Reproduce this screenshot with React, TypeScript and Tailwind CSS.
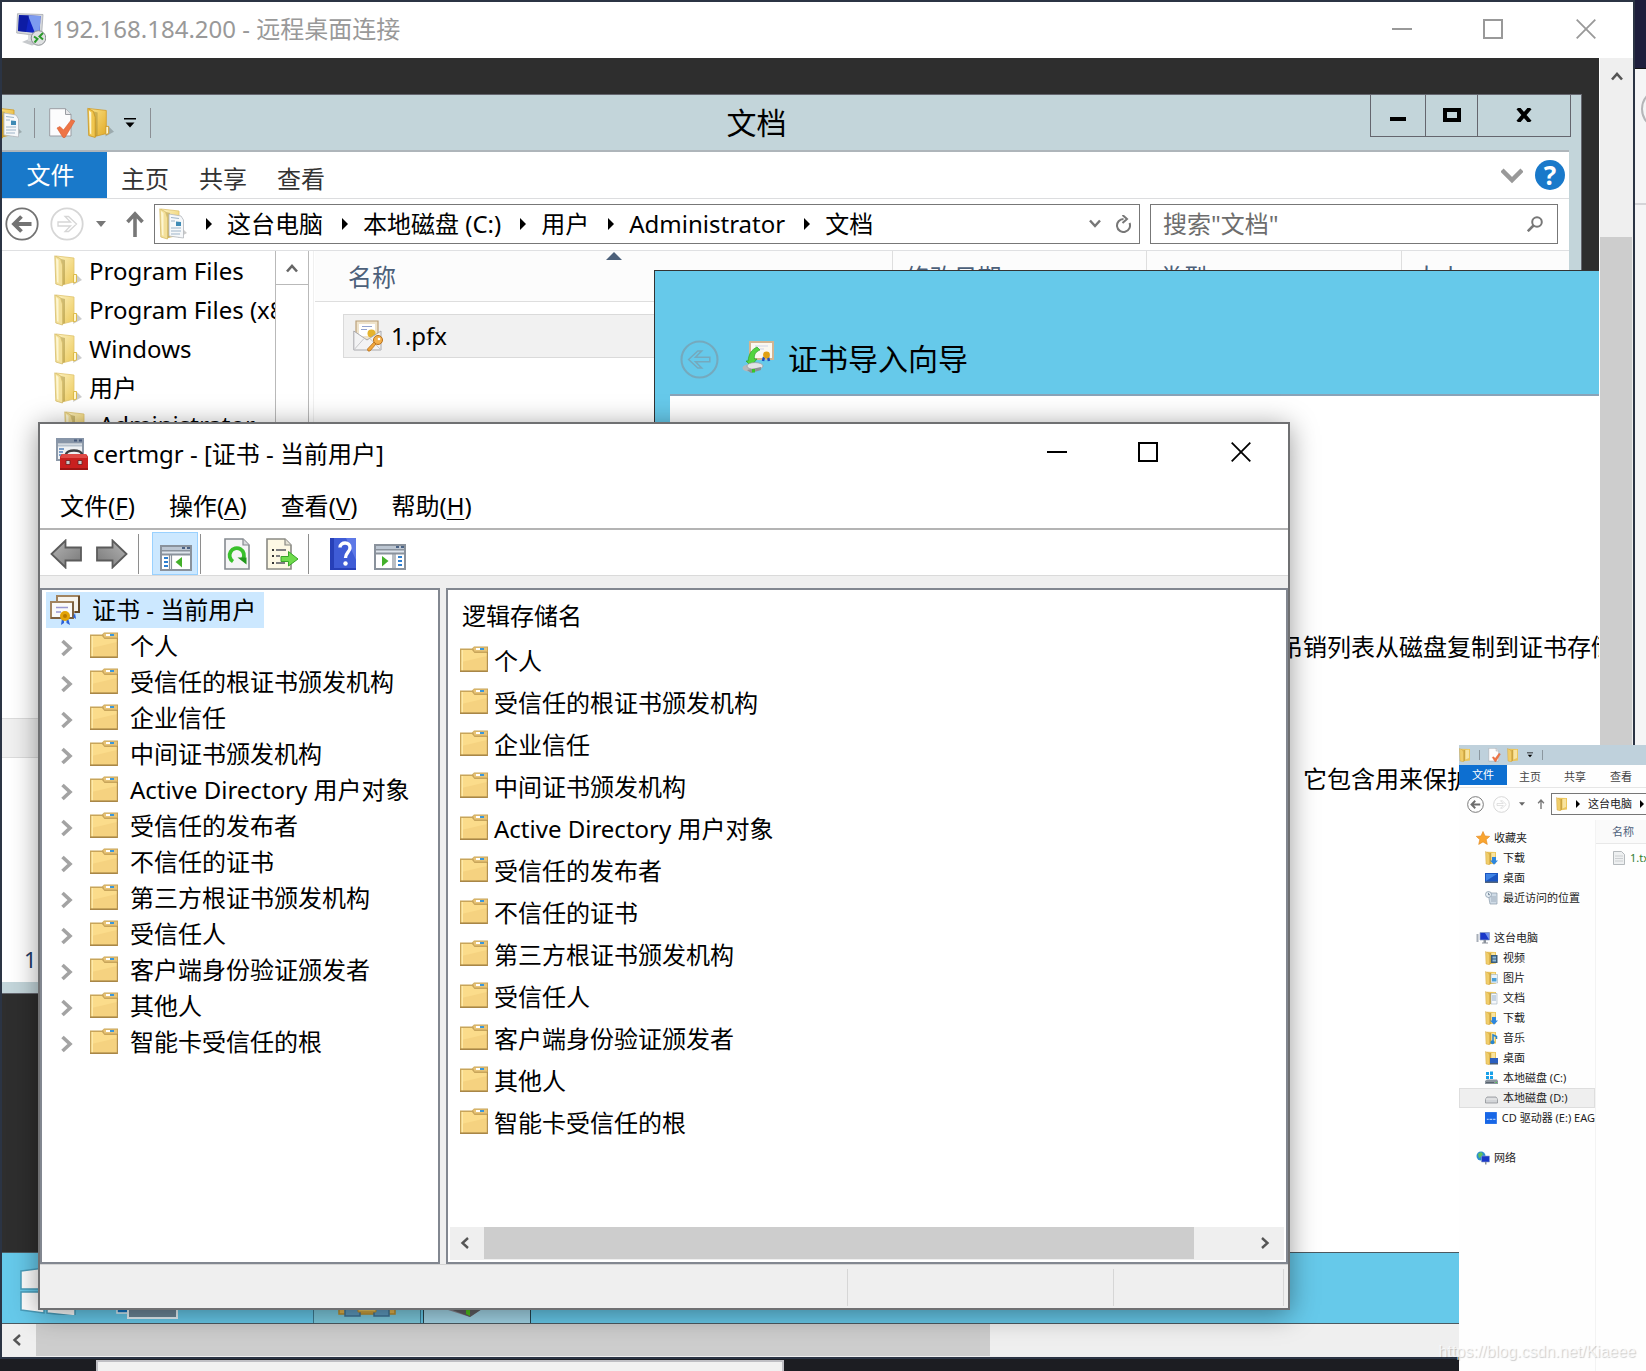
import React from "react";

type P = { className?: string };

/* ---------- small glyphs ---------- */

const Minus = ({ className }: P) => (
  <svg viewBox="0 0 20 20" className={className} fill="none" stroke="currentColor" strokeWidth="2">
    <path d="M0 10H20" />
  </svg>
);
const Square = ({ className }: P) => (
  <svg viewBox="0 0 20 20" className={className} fill="none" stroke="currentColor" strokeWidth="2">
    <path d="M1 1H19V19H1Z" />
  </svg>
);
const Cross = ({ className }: P) => (
  <svg viewBox="0 0 20 20" className={className} fill="none" stroke="currentColor" strokeWidth="1.8">
    <path d="M.7.7L19.3 19.3M19.3.7L.7 19.3" />
  </svg>
);
const ChevronUp = ({ className }: P) => (
  <svg viewBox="0 0 12 10" className={className} fill="none" stroke="currentColor" strokeWidth="2.6">
    <path d="M1 8.5L6 3L11 8.5" />
  </svg>
);
const ChevronSide = ({ className, flip }: P & { flip?: boolean }) => (
  <svg viewBox="0 0 10 12" className={className} fill="none" stroke="currentColor" strokeWidth="2.4">
    <path d={flip ? "M2 1L7.5 6L2 11" : "M8 1L2.5 6L8 11"} />
  </svg>
);
const Crumb = ({ className }: P) => (
  <svg viewBox="0 0 6 12" className={className} fill="#000">
    <path d="M0 0L6 6L0 12Z" />
  </svg>
);
const ArrowCircle = ({ className, dir, hollow }: P & { dir: "left" | "right"; hollow?: boolean }) => (
  <svg viewBox="0 0 34 34" className={className} fill="none" stroke="currentColor">
    <circle cx="17" cy="17" r="15.7" strokeWidth="1.8" />
    <g transform={dir === "right" ? "matrix(-1 0 0 1 34 0)" : undefined}>
      {hollow ? (
        <path d="M7.5 17L15.5 9.5H19L13.5 15H26V19H13.5L19 24.5H15.5Z" strokeWidth="1.3" />
      ) : (
        <path d="M26.5 17H10M16.5 9.5L9 17L16.5 24.5" strokeWidth="3.8" />
      )}
    </g>
  </svg>
);
const UpArrow = ({ className }: P) => (
  <svg viewBox="0 0 18 26" className={className} fill="none" stroke="#777" strokeWidth="3.6">
    <path d="M9 26V3M1.5 11L9 2.8L16.5 11" />
  </svg>
);
const DownTri = ({ className }: P) => (
  <svg viewBox="0 0 10 6" className={className} fill="currentColor">
    <path d="M0 0H10L5 6Z" />
  </svg>
);
const QuickMenu = ({ className }: P) => (
  <svg viewBox="0 0 12 10" className={className} fill="#000">
    <path d="M0 0H12V1.5H0ZM1.5 4.5H10.5L6 9.5Z" />
  </svg>
);

/* ---------- folder and file icons ---------- */

const OpenFolder = ({ className, page, vivid }: P & { page?: boolean; vivid?: boolean }) => (
  <svg viewBox="0 0 28 32" className={className}>
    <defs>
      <linearGradient id="leaf" x1="0" y1="0" x2="1" y2="1">
        <stop offset="0" stopColor="#fdf3c4" />
        <stop offset="1" stopColor="#ecc95a" />
      </linearGradient>
      <linearGradient id="leafVivid" x1="0" y1="0" x2="1" y2="1">
        <stop offset="0" stopColor="#fbe48a" />
        <stop offset="1" stopColor="#e2ab28" />
      </linearGradient>
    </defs>
    <path d="M19 30L28 25L22 19Z" fill="#000" opacity=".2" />
    <path
      d="M2 1L20 3V27L8 30Z"
      fill={vivid ? "url(#leafVivid)" : "url(#leaf)"}
      stroke={vivid ? "#d19a22" : "#dfc470"}
      strokeWidth=".8"
    />
    <path d="M7 4L11 5V29L7.500 30.500Z" fill="#9c8432" opacity=".45" />
    {page && (
      <>
        <path d="M10 6L22 8L24.500 12V30L10 28Z" fill="#f6f8fa" stroke="#b4b8bd" strokeWidth=".8" />
        <path d="M12 9.500L20 10.500M12 13H16M12 20H22M12 23H22M12 26H21" stroke="#9db4c8" strokeWidth="1.2" />
        <path d="M17 13.500L22 14V18H17Z" fill="#3f8bb5" />
      </>
    )}
    <path
      d="M.8.800L6.500 3.800L8.500 10V31L1.800 29Z"
      fill={vivid ? "#f0c64e" : "#f3e09a"}
      stroke={vivid ? "#c8921c" : "#d6bd6b"}
      strokeWidth=".8"
    />
    <path d="M2 3L4.500 5V28L3 27Z" fill="#fdf6d2" />
    {!page && (
      <path d="M19.500 19.500H22.500V27L19.500 28Z" fill="#fff6cf" stroke={vivid ? "#cf9a26" : "#ddbb4a"} strokeWidth="1" />
    )}
  </svg>
);

const PlainFolder = ({ className }: P) => (
  <svg viewBox="0 0 28 26" className={className}>
    <path d="M0 2.500H12L14 .5H28V26H0Z" fill="#c8a55a" />
    <path d="M1.500 4H12L14.500 7H27V24.500H1.500Z" fill="#fbdc8b" />
    <path d="M1.500 16L27 10V24.500H1.500Z" fill="#f3cf7c" opacity=".75" />
    <path d="M1.500 4H3V24.500H1.500Z" fill="#fdeaa9" />
    <path d="M13 1.500H27V5.500H14.500Z" fill="#e8c477" />
    <path d="M16 2H20V4H16Z" fill="#fff" />
    <path d="M20 2H24V4H20Z" fill="#3b97d9" />
    <path d="M0 24.500H28V26H0Z" fill="#a88647" />
    <path d="M26.800 6H28V26H26.800Z" fill="#b49150" />
  </svg>
);

const CheckDoc = ({ className }: P) => (
  <svg viewBox="0 0 26 30" className={className}>
    <path d="M.7.700H16.500L22 6.500V28H.7Z" fill="#fcfcfd" stroke="#9a9da3" strokeWidth="1" />
    <path d="M16.500.700V6.500H22" fill="#e6e6e9" stroke="#9a9da3" strokeWidth="1" />
    <path d="M8 20L11 18.500L14.500 22L22.500 11.500L25.800 13L16 29.500H14Z" fill="#ee7445" stroke="#d65c30" strokeWidth=".6" />
  </svg>
);

const RdpIcon = ({ className }: P) => (
  <svg viewBox="0 0 30 33" className={className}>
    <path d="M6 29L13 26H21L24 30L16 32.500Z" fill="#c6c9cc" />
    <path d="M12 22H18V28H12Z" fill="#d9dbdd" />
    <path d="M1.500.700L27 1.500L25.500 23L.7 20Z" fill="#d5d8dc" stroke="#a8abb0" strokeWidth=".8" />
    <path d="M3 2L24.500 3L23.500 20.500L2 18Z" fill="#1226c4" />
    <path d="M12 2.500L24.500 3L23.500 20.500L19 20Z" fill="#7d9cf0" />
    <path d="M3 2L13 2.500L10 19L2 18Z" fill="#0a1590" opacity=".6" />
    <circle cx="22.500" cy="25" r="7.300" fill="#dfe1e2" stroke="#8b8f93" strokeWidth="1" />
    <path d="M18 23.500L21.500 26L18.500 29.500M27 20L23.500 23.500L27 26.500" fill="none" stroke="#2c9a2c" strokeWidth="2" />
  </svg>
);

const PfxIcon = ({ className }: P) => (
  <svg viewBox="0 0 30 32" className={className}>
    <path d="M3 1H25V20H3Z" fill="#efe3cb" stroke="#b99f78" strokeWidth="1.2" />
    <path d="M6 4H22V16H6Z" fill="#fff" />
    <path d="M9 6.500H19M8 9.500H14" stroke="#93a3cf" strokeWidth="1" />
    <circle cx="18.500" cy="13.500" r="4" fill="#e5b32e" />
    <path d="M.8 11L14 20L28 11V30H.8Z" fill="#f3f3f4" stroke="#a9a9ad" strokeWidth="1" />
    <path d="M.8 30L11 18.500M28 30L17 18.500" stroke="#c6c6c9" strokeWidth="1" fill="none" />
    <path d="M23 24L17 31H15L14.500 29L21.500 21.500Z" fill="#f1a73c" stroke="#b9701a" strokeWidth=".8" />
    <circle cx="25" cy="20" r="4.500" fill="#f4b04b" stroke="#b9701a" strokeWidth="1" />
    <circle cx="26" cy="19" r="1.300" fill="#fff" />
  </svg>
);

const ImportIcon = ({ className }: P) => (
  <svg viewBox="0 0 32 32" className={className}>
    <path d="M8 1H31V18H8Z" fill="#fbf8f1" stroke="#d2b592" strokeWidth="2" />
    <path d="M13 5H26M13 8H22" stroke="#cfd5e8" strokeWidth="1" />
    <path d="M22 16L21 20M26 16L27 20" stroke="#1d4fc4" strokeWidth="2.500" />
    <circle cx="24.500" cy="14" r="3.400" fill="#e0a012" />
    <path d="M6 20C7 13 9 9 15 6L18 9C13 11 12 14 12.500 18H15L9 25L4 20Z" fill="#52d43e" stroke="#2aa12a" strokeWidth=".7" />
    <ellipse cx="7" cy="27" rx="6.500" ry="3.600" fill="#b5b8bc" />
    <ellipse cx="13" cy="25" rx="8" ry="3.400" fill="#e2e4e6" stroke="#8b8f93" strokeWidth=".6" />
    <path d="M5 29L19 26V29L9 32Z" fill="#8d9195" />
    <path d="M10 28H13V31.500H10Z" fill="#35c728" />
  </svg>
);

const ToolboxIcon = ({ className }: P) => (
  <svg viewBox="0 0 32 32" className={className}>
    <path d="M0 0H28V23H0Z" fill="#8d99a8" />
    <path d="M2 5.500H26V21H2Z" fill="#eef1f4" />
    <path d="M0 0H28V5H0Z" fill="#8795a8" />
    <path d="M18 1.500H21V3.500H18ZM23 1.500H26V3.500H23Z" fill="#46597a" />
    <path d="M2 6.500H26V8.500H2Z" fill="#b6c1cd" />
    <path d="M3 11H8M3 14H7M3 17H6" stroke="#5682bb" strokeWidth="1.5" />
    <path d="M10 17C10 11 26 11 26 17" fill="none" stroke="#3d3d40" strokeWidth="2.600" />
    <path d="M4 18.500L6 16H30L32 18.500V32H4Z" fill="#c9201f" />
    <path d="M6 16H30L31.500 20H4.500Z" fill="#df4a46" />
    <path d="M4 30H32V32H4Z" fill="#9c1514" />
    <path d="M10 22.500H14V26.500H10ZM22 22.500H26V26.500H22Z" fill="#c9c9cb" stroke="#6c1b1b" strokeWidth=".8" />
  </svg>
);

const CertIcon = ({ className }: P) => (
  <svg viewBox="0 0 30 30" className={className}>
    <path d="M7 1H29V17H7Z" fill="#f6f4ee" stroke="#a18460" strokeWidth="2" />
    <path d="M29 1V17H25" fill="none" stroke="#65492a" strokeWidth="2" />
    <path d="M1 7H23V23H1Z" fill="#fafafa" stroke="#a18460" strokeWidth="2" />
    <path d="M23 7V23H1" fill="none" stroke="#715537" strokeWidth="1.500" />
    <path d="M6 12.500H18M6 17H11" stroke="#9898d2" strokeWidth="1.600" />
    <path d="M12 23L11 30L14 28V23ZM18 23L20 30L16.500 28V23Z" fill="#2b62d9" />
    <path d="M25 18L26 24L23 22Z" fill="#2b62d9" />
    <circle cx="15" cy="21" r="5" fill="#e3a408" />
    <circle cx="15" cy="21" r="2" fill="#b77900" />
  </svg>
);

const NavArrow = ({ className, right }: P & { right?: boolean }) => (
  <svg viewBox="0 0 32 30" className={className}>
    <defs>
      <linearGradient id={right ? "navR" : "navL"} x1="0" y1="0" x2="1" y2="1">
        <stop offset="0" stopColor="#b5b5b5" />
        <stop offset="1" stopColor="#777" />
      </linearGradient>
    </defs>
    <g transform={right ? "matrix(-1 0 0 1 32 0)" : undefined}>
      <path
        d="M1.500 15L15.500 1.500V8.500H31V21.500H15.500V28.500Z"
        fill={right ? "url(#navR)" : "url(#navL)"}
        stroke="#5b5b5b"
        strokeWidth="1.800"
      />
    </g>
  </svg>
);

const PaneIcon = ({ className, right }: P & { right?: boolean }) => (
  <svg viewBox="0 0 32 26" className={className}>
    <path d="M0 0H32V26H0Z" fill="#8a929c" />
    <path d="M2 2H30V5H2Z" fill="#bcc6d2" />
    <path d="M22 2H25V4H22ZM27 2H30V4H27Z" fill="#4a6285" />
    <path d="M2 6.500H30V8.500H2Z" fill="#dfe5ec" />
    <path d="M2 10.500H30V24H2Z" fill="#fff" />
    {right ? (
      <>
        <path d="M19 10V25M21 10V25" stroke="#8a929c" strokeWidth="1.200" />
        <path d="M24 13H28M24 17H28M24 21H28" stroke="#2f7fd0" strokeWidth="2" />
        <path d="M8 12L14.500 17L8 22.500Z" fill="#43b02a" />
      </>
    ) : (
      <>
        <path d="M9.500 10V25M11.500 10V25" stroke="#8a929c" strokeWidth="1.200" />
        <path d="M4 13H8M4 17H8M4 21H8" stroke="#2f7fd0" strokeWidth="2" />
        <path d="M22 12L15.500 17L22 22.500Z" fill="#43b02a" />
      </>
    )}
  </svg>
);

const RefreshIcon = ({ className }: P) => (
  <svg viewBox="0 0 26 32" className={className}>
    <path d="M1 1H19L25 7V31H1Z" fill="#f5f5f6" stroke="#858a90" strokeWidth="1.600" />
    <path d="M19 1V7H25" fill="#d8dadd" stroke="#858a90" strokeWidth="1.200" />
    <path d="M9 23.500A7.200 7.200 0 1 1 19 21" fill="none" stroke="#39c02c" strokeWidth="3.800" />
    <path d="M13.500 19.500H22.500V26.500Z" fill="#22981d" />
  </svg>
);

const ExportIcon = ({ className }: P) => (
  <svg viewBox="0 0 32 32" className={className}>
    <path d="M1 1H19L25 7V31H1Z" fill="#fdf8e4" stroke="#8a8a84" strokeWidth="1.600" />
    <path d="M19 1V7H25" fill="#e5e2d5" stroke="#8a8a84" strokeWidth="1.200" />
    <path d="M6 12H8M6 18H8M6 25H8" stroke="#333" strokeWidth="1.800" />
    <path d="M10 12H20M10 18H14M10 25H19" stroke="#7e7e80" strokeWidth="1.800" />
    <path d="M15 18.500H22.500V13.500L32 21L22.500 28V23.500H15Z" fill="#6fdb4c" stroke="#38a428" strokeWidth="1" />
  </svg>
);

const HelpBook = ({ className }: P) => (
  <svg viewBox="0 0 26 32" className={className}>
    <path d="M0 0H26V32H0Z" fill="#2740b8" />
    <path d="M4 0H26V30H4Z" fill="#3f5cd6" />
    <path d="M16 0H26V22Z" fill="#6c86ee" opacity=".7" />
    <path d="M10 9.500C10 3.500 20.500 3.500 20 10C19.800 14 15.500 14.500 15.500 20" fill="none" stroke="#fff" strokeWidth="3.400" />
    <circle cx="15.500" cy="25.500" r="2.200" fill="#fff" />
  </svg>
);

/* ---------- icons of the small explorer ---------- */

const MiniFolder = ({ className, children }: P & { children?: React.ReactNode }) => (
  <svg viewBox="0 0 13 14" className={className}>
    <path d="M2 .8L11 1V12.500L3 13.500Z" fill="#ecc65c" />
    <path d="M4.500 2L6 2V12.800L4.500 13.300Z" fill="#b38e30" opacity=".6" />
    <path d="M.5.500L3.500 2L4.500 4V13.800L1 13Z" fill="#f0cd6a" stroke="#cf9f38" strokeWidth=".4" />
    <path d="M6.500 2L10 1.800V10L6.500 11.500Z" fill="#f8e3a0" />
    {children}
  </svg>
);

const miniIcons: Record<string, React.ReactNode> = {
  star: (
    <svg viewBox="0 0 14 14" className="size-3.5">
      <path d="M7 .5L9 5L13.700 5.400L10.200 8.600L11.300 13.400L7 10.900L2.700 13.400L3.800 8.600L.3 5.400L5 5Z" fill="#f9a531" stroke="#e0851a" strokeWidth=".6" />
    </svg>
  ),
  download: (
    <MiniFolder className="h-3.5 w-[13px]">
      <path d="M7 6H11V9.500H13L9 13.800L5 9.500H7Z" fill="#2d86dd" />
    </MiniFolder>
  ),
  desktop: (
    <svg viewBox="0 0 13 14" className="h-3.5 w-[13px]">
      <path d="M0 2H13V11.500H0Z" fill="#1b55c0" />
      <path d="M1 3L12 3L1 10Z" fill="#3f83e4" />
      <path d="M0 10.500H13V12H0Z" fill="#51657f" />
    </svg>
  ),
  recent: (
    <svg viewBox="0 0 13 14" className="h-3.5 w-[13px]">
      <path d="M3 2H12V13H5Z" fill="#cfdbe6" stroke="#8b9bab" strokeWidth=".7" />
      <path d="M6 6H11M6 8H11M6 10H11" stroke="#8b9bab" strokeWidth=".7" />
      <circle cx="3.500" cy="3.500" r="3" fill="#e6edf3" stroke="#7f92a5" strokeWidth=".7" />
      <path d="M3.500 1.800V3.700H5" stroke="#4a6179" strokeWidth=".7" fill="none" />
    </svg>
  ),
  computer: (
    <svg viewBox="0 0 14 14" className="size-3.5">
      <path d="M.5 3H2.500V11H.5Z" fill="#a8afb8" />
      <path d="M4 1.500H13.500V9H4Z" fill="#1a38c8" stroke="#8fa0c0" strokeWidth=".7" />
      <path d="M9 2H13V8.500Z" fill="#6f90ee" />
      <path d="M7.500 9H10V11.500H12V12.500H6V11.500H7.500Z" fill="#8b929c" />
    </svg>
  ),
  video: (
    <MiniFolder className="h-3.5 w-[13px]">
      <path d="M6 4H12.500V12H6Z" fill="#3b5c78" />
      <path d="M7.500 5.500H11V7.500H7.500ZM7.500 8.500H11V10.500H7.500Z" fill="#8db9db" />
    </MiniFolder>
  ),
  picture: (
    <MiniFolder className="h-3.5 w-[13px]">
      <path d="M6 3.500H12.500V12H6Z" fill="#eaf4fb" stroke="#8fa6b8" strokeWidth=".5" />
      <path d="M7 7H11.500V10.500H7Z" fill="#4aa0d8" />
    </MiniFolder>
  ),
  document: (
    <MiniFolder className="h-3.5 w-[13px]">
      <path d="M6 2.500H12V13H6Z" fill="#f5f8fb" stroke="#8fa0b0" strokeWidth=".5" />
      <path d="M7 5H11M7 7H11M7 9H11" stroke="#6e93b8" strokeWidth=".7" />
    </MiniFolder>
  ),
  music: (
    <MiniFolder className="h-3.5 w-[13px]">
      <path d="M8 11V4L11.500 5.500V8" fill="none" stroke="#2785cf" strokeWidth="1.500" />
      <circle cx="7.500" cy="11.200" r="2" fill="#2785cf" />
    </MiniFolder>
  ),
  deskfolder: (
    <MiniFolder className="h-3.5 w-[13px]">
      <path d="M5 7H13V13H5Z" fill="#2a5fc0" />
      <path d="M5 12H13V13.500H5Z" fill="#4b5c75" />
    </MiniFolder>
  ),
  system: (
    <svg viewBox="0 0 13 14" className="h-3.5 w-[13px]">
      <path d="M1 1H4V4H1ZM5 .5H8V4H5ZM1 5H4V8H1ZM5 5H8V8H5Z" fill="#18a0e8" />
      <path d="M0 10L2 8.500H12L13 10V13H0Z" fill="#8b949e" />
      <path d="M1 11H9V12H1Z" fill="#5a646f" />
      <path d="M10.500 11H12V12H10.500Z" fill="#47d147" />
    </svg>
  ),
  drive: (
    <svg viewBox="0 0 13 14" className="h-3.5 w-[13px]">
      <path d="M.5 8L2 6H11L12.500 8V12H.5Z" fill="#d3d5d8" stroke="#84888d" strokeWidth=".7" />
      <path d="M.5 8H12.500" stroke="#f5f5f5" strokeWidth=".7" />
    </svg>
  ),
  cd: (
    <svg viewBox="0 0 13 14" className="h-3.5 w-[13px]">
      <path d="M0 .5H13V13.500H0Z" fill="#1766e6" />
      <path d="M2 8.500H4M5 8.500H8M9 8.500H11.500" stroke="#a9c9fb" strokeWidth="1.200" />
    </svg>
  ),
  network: (
    <svg viewBox="0 0 14 14" className="size-3.5">
      <circle cx="5" cy="5" r="4.500" fill="#2c8fd0" />
      <path d="M2 3L5 1L7 3L5 6L3 7Z" fill="#5ec15a" />
      <path d="M5.500 5H13.500V11H5.500Z" fill="#1a38c8" stroke="#93a5c8" strokeWidth=".6" />
      <path d="M9 11H10.500V13.500H9Z" fill="#8b929c" />
    </svg>
  ),
};

/* ---------- data ---------- */

const stores = [
  "个人",
  "受信任的根证书颁发机构",
  "企业信任",
  "中间证书颁发机构",
  "Active Directory 用户对象",
  "受信任的发布者",
  "不信任的证书",
  "第三方根证书颁发机构",
  "受信任人",
  "客户端身份验证颁发者",
  "其他人",
  "智能卡受信任的根",
];

const menus = [
  ["文件", "F"],
  ["操作", "A"],
  ["查看", "V"],
  ["帮助", "H"],
];

const crumbs = ["这台电脑", "本地磁盘 (C:)", "用户", "Administrator", "文档"];

const miniGroups: { icon: string; name: string; items: { icon: string; name: string; active?: boolean }[] }[] = [
  {
    icon: "star",
    name: "收藏夹",
    items: [
      { icon: "download", name: "下载" },
      { icon: "desktop", name: "桌面" },
      { icon: "recent", name: "最近访问的位置" },
    ],
  },
  {
    icon: "computer",
    name: "这台电脑",
    items: [
      { icon: "video", name: "视频" },
      { icon: "picture", name: "图片" },
      { icon: "document", name: "文档" },
      { icon: "download", name: "下载" },
      { icon: "music", name: "音乐" },
      { icon: "deskfolder", name: "桌面" },
      { icon: "system", name: "本地磁盘 (C:)" },
      { icon: "drive", name: "本地磁盘 (D:)", active: true },
      { icon: "cd", name: "CD 驱动器 (E:) EAG" },
    ],
  },
  { icon: "network", name: "网络", items: [] },
];

/* ---------- remote explorer window ---------- */

function Explorer() {
  return (
    <section className="absolute top-9 right-[17px] bottom-[330px] left-0 flex flex-col border-t border-r border-b border-[#65666e] bg-[#c3d5da] pr-3 pb-[11px]">
      <header className="relative flex h-[57px] shrink-0 items-center border-b-2 border-[#aeb5ba]">
        <OpenFolder page vivid className="-ml-2 h-8 w-7" />
        <span className="ml-3 h-[30px] w-px bg-[#8b8f94]" />
        <CheckDoc className="ml-3.5 h-[30px] w-[26px]" />
        <OpenFolder vivid className="ml-3 h-8 w-[27px]" />
        <QuickMenu className="ml-2.5 h-2.5 w-3" />
        <span className="ml-3.5 h-[30px] w-px bg-[#8b8f94]" />
        <h2 className="absolute inset-x-0 -ml-[58px] text-center text-[30px] leading-[56px]">文档</h2>
        <div className="absolute top-0 -right-0.5 flex h-[42px] border-x border-b border-[#65666e]">
          <button aria-label="最小化" className="flex w-[55px] items-end justify-center border-r border-[#65666e] pb-[15px]">
            <span className="h-1 w-4 bg-black" />
          </button>
          <button aria-label="最大化" className="flex w-[52px] items-center justify-center border-r border-[#65666e] pb-0.5">
            <span className="h-3.5 w-[18px] border-4 border-black" />
          </button>
          <button aria-label="关闭" className="flex w-[92px] items-center justify-center pb-0.5">
            <svg viewBox="0 0 16 14" className="h-3.5 w-4" stroke="#000" strokeWidth="4">
              <path d="M2 0L14 14M14 0L2 14" />
            </svg>
          </button>
        </div>
      </header>

      <nav className="flex h-[47px] shrink-0 items-stretch border-b border-[#dcdddf] bg-white text-[#333]">
        <button className="w-[105px] bg-[#1979ca] pr-2 text-white">文件</button>
        <button className="ml-3.5 pt-2">主页</button>
        <button className="ml-[30px] pt-2">共享</button>
        <button className="ml-[30px] pt-2">查看</button>
        <div className="ml-auto flex items-center gap-3 pr-1">
          <svg viewBox="0 0 22 17" className="h-[17px] w-[22px]" fill="none" stroke="#999" strokeWidth="4.500">
            <path d="M1 3L11 13L21 3" />
          </svg>
          <button aria-label="帮助" className="flex size-[30px] items-center justify-center rounded-full bg-[#1979ca] text-[26px] font-bold text-white">
            ?
          </button>
        </div>
      </nav>

      <div className="flex h-[52px] shrink-0 items-center border-b border-[#dfe0e2] bg-white pb-0.5 pl-[3px]">
        <ArrowCircle dir="left" className="size-[34px] text-[#737373]" />
        <ArrowCircle dir="right" hollow className="ml-[11px] size-[34px] text-[#d6d6d6]" />
        <DownTri className="ml-3 h-1.5 w-2.5 text-[#777]" />
        <UpArrow className="ml-5 h-[26px] w-[18px]" />
        <div className="ml-2.5 flex h-10 flex-1 items-center border border-[#777] pl-1 text-black">
          <OpenFolder page className="h-8 w-7" />
          {crumbs.map((c) => (
            <React.Fragment key={c}>
              <Crumb className="ml-[19px] h-3 w-1.5 shrink-0" />
              <span className="ml-[15px] whitespace-nowrap">{c}</span>
            </React.Fragment>
          ))}
          <svg viewBox="0 0 12 9" className="mr-3.5 ml-auto h-[9px] w-3" fill="none" stroke="#777" strokeWidth="2.500">
            <path d="M1 1.500L6 7L11 1.500" />
          </svg>
          <svg viewBox="0 0 16 18" className="mr-2 h-[18px] w-4" fill="none" stroke="#777" strokeWidth="2">
            <path d="M14.500 8A6.500 6.500 0 1 1 8.500 4" />
            <path d="M7.500 0L12 4L7.500 8" />
          </svg>
        </div>
        <label className="mr-[11px] ml-2.5 flex h-10 w-[408px] items-center border border-[#777] pr-3.5 pl-3">
          <input aria-label="搜索" placeholder={'搜索"文档"'} className="min-w-0 flex-1 outline-none placeholder:text-[#6d6d6d]" />
          <svg viewBox="0 0 16 16" className="size-4" fill="none" stroke="#777" strokeWidth="2">
            <circle cx="10" cy="6" r="4.800" />
            <path d="M6.500 9.500L.8 15.200" strokeWidth="2.600" />
          </svg>
        </label>
      </div>

      <div className="flex min-h-0 flex-1 bg-white">
        <div className="relative w-[273px] shrink-0 overflow-hidden">
          <ul className="text-black">
            {["Program Files", "Program Files (x86)", "Windows", "用户"].map((n) => (
              <li key={n} className="flex h-[39px] items-center pl-[52px] whitespace-nowrap">
                <OpenFolder className="h-8 w-7 shrink-0" />
                <span className="ml-[7px]">{n}</span>
              </li>
            ))}
            <li className="flex h-[39px] items-center pl-[62px] whitespace-nowrap">
              <OpenFolder className="h-8 w-7 shrink-0" />
              <span className="mb-1 ml-[7px]">Administrator</span>
            </li>
          </ul>
          <div className="mt-[272px] h-10 border-y border-[#dcdcdc] bg-[#f0f0f0]" />
          <div className="absolute bottom-0 left-[22px] text-[22px] leading-[46px] text-[#1e3a66]">1</div>
        </div>
        <div className="w-[34px] shrink-0 border-x border-[#b9b9b9]">
          <button aria-label="向上滚动" className="flex h-[34px] w-full items-center justify-center border-b border-[#b9b9b9] text-[#666]">
            <ChevronUp className="h-2.5 w-3" />
          </button>
        </div>
        <div className="mr-px ml-1 w-px bg-[#f0f0f0]" />
        <table className="h-fit flex-1 table-fixed text-left">
          <colgroup>
            <col className="w-[577px]" />
            <col className="w-[254px]" />
            <col className="w-[255px]" />
            <col />
          </colgroup>
          <thead>
            <tr className="h-[50px] border-b border-[#dedede] bg-[#fcfcfc] text-[#4c607a]">
              <th className="relative border-r border-[#dedede] pt-0.5 pl-[33px] font-normal">
                名称
                <svg viewBox="0 0 16 8" className="absolute top-px left-[291px] h-2 w-4" fill="#4c607a">
                  <path d="M8 0L16 8H0Z" />
                </svg>
              </th>
              <th className="border-r border-[#dedede] pt-0.5 pl-[13px] font-normal">修改日期</th>
              <th className="border-r border-[#dedede] pt-0.5 pl-[13px] font-normal">类型</th>
              <th className="pt-0.5 pl-[13px] font-normal">大小</th>
            </tr>
          </thead>
          <tbody>
            <tr>
              <td colSpan={4} className="pt-3 pl-7">
                <div className="flex h-11 items-center border border-[#dadada] bg-[#f1f1f1] pl-[9px] text-black">
                  <PfxIcon className="h-8 w-[30px]" />
                  <span className="ml-2">1.pfx</span>
                </div>
              </td>
            </tr>
          </tbody>
        </table>
      </div>
    </section>
  );
}

function Wizard() {
  return (
    <section className="absolute top-[212px] right-0 bottom-[72px] left-[652px] flex flex-col overflow-hidden border-t border-l border-[#333] bg-[#66c9ea] pl-[15px] text-black">
      <header className="flex h-[123px] shrink-0 items-end pb-[15px] pl-2.5">
        <ArrowCircle dir="left" hollow className="size-[39px] text-[#75a9bd]" />
        <ImportIcon className="mb-1.5 ml-[23px] size-8" />
        <h2 className="ml-3.5 text-[30px] leading-[40px]">证书导入向导</h2>
      </header>
      <div className="min-h-0 flex-1 border-t-2 border-[#8aa3b8] bg-white pl-[609px] whitespace-nowrap">
        <p className="pt-[233px] leading-9">吊销列表从磁盘复制到证书存储</p>
        <p className="pt-24 leading-9">，它包含用来保护</p>
      </div>
    </section>
  );
}

function Taskbar() {
  return (
    <footer className="absolute inset-x-0 bottom-0 flex h-[72px] items-end border-y border-[#4c5a61] bg-[#66c9ea]">
      <svg viewBox="0 0 56 48" className="mb-2 ml-[18px] h-12 w-14" fill="#fff" stroke="#4a9dbb" strokeWidth="1.500">
        <path d="M1 4L24 1V22H1ZM27 .5L55 -3V22H27ZM1 25H24V46L1 43ZM27 25H55V49L27 46Z" />
      </svg>
      <svg viewBox="0 0 62 40" className="mb-1 ml-10 h-10 w-[62px]">
        <path d="M1 10H20V34H1Z" fill="#0f74c4" stroke="#e8f3f8" strokeWidth="1.500" />
        <path d="M12 2H61V39H12Z" fill="#6d8799" stroke="#e8f3f8" strokeWidth="2" />
      </svg>
      <div className="ml-[135px] flex h-full w-[108px] items-end justify-center border-x border-[#3d7c93] bg-[#7dcbdf] pb-1.5">
        <svg viewBox="0 0 58 34" className="h-[34px] w-[58px]">
          <path d="M1 2H57V31H1Z" fill="#e3b650" stroke="#b98d2e" strokeWidth="1.500" />
          <path d="M7 12H22V33H7ZM36 12H51V33H36Z" fill="#5f9cc0" stroke="#3f7699" strokeWidth="1.500" />
          <path d="M20 14H38V29H20Z" fill="#e9c55c" stroke="#b98d2e" />
        </svg>
      </div>
      <div className="ml-0.5 flex h-full w-[108px] items-end border-x border-[#26424d] bg-[#a3d6e8] pb-1.5 pl-5">
        <svg viewBox="0 0 42 30" className="h-[30px] w-[42px]">
          <path d="M1 20L22 2L41 14V20L26 30L1 22Z" fill="#8a8790" />
          <path d="M1 20L22 12L41 20L26 30Z" fill="#5f5e63" />
          <path d="M22 20H26V29L22 27Z" fill="#4ec21a" />
        </svg>
      </div>
    </footer>
  );
}

function HorizontalThumb({ grow, rest, right }: { grow: string; rest: string; right?: boolean }) {
  return (
    <div className="flex h-[33px] shrink-0 bg-[#efefef] text-[#555]">
      <button aria-label="向左滚动" className="flex w-[34px] shrink-0 items-center justify-center pr-1 pb-0.5">
        <ChevronSide className="h-3.5 w-2.5" />
      </button>
      <div className={`mb-px bg-[#cdcdcd] ${grow}`} />
      <div className={rest} />
      {right && (
        <button aria-label="向右滚动" className="flex w-[38px] shrink-0 items-center justify-center pb-0.5">
          <ChevronSide flip className="h-3.5 w-2.5" />
        </button>
      )}
    </div>
  );
}

/* ---------- certificate manager ---------- */

function CertManager() {
  return (
    <section className="absolute top-[422px] right-[356px] bottom-[61px] left-[38px] flex flex-col border-2 border-[#6f7072] bg-white text-black shadow-[0_4px_26px_rgba(0,0,0,0.4)]">
      <header className="flex h-[61px] shrink-0 items-center pb-0.5 pl-4">
        <ToolboxIcon className="size-8" />
        <h1 className="ml-[5px]">certmgr - [证书 - 当前用户]</h1>
        <div className="ml-auto flex items-center pr-[37px] pb-1">
          <button aria-label="最小化">
            <Minus className="size-5" />
          </button>
          <button aria-label="最大化" className="ml-[71px]">
            <Square className="size-5" />
          </button>
          <button aria-label="关闭" className="ml-[73px]">
            <Cross className="size-5" />
          </button>
        </div>
      </header>
      <nav className="flex h-[45px] shrink-0 items-center gap-[34px] border-b-2 border-[#b4b4b4] pb-0.5 pl-5">
        {menus.map(([label, key]) => (
          <button key={key}>
            {label}(<span className="underline decoration-1 underline-offset-4">{key}</span>)
          </button>
        ))}
      </nav>
      <div className="flex h-[46px] shrink-0 items-center border-b border-[#dadada] pt-0.5 pl-2.5">
        <button aria-label="后退">
          <NavArrow className="h-[30px] w-8" />
        </button>
        <button aria-label="前进" className="ml-3.5">
          <NavArrow right className="h-[30px] w-8" />
        </button>
        <span className="ml-2.5 h-10 w-px bg-[#8e8e8e]" />
        <button aria-label="显示控制台树" className="ml-[13px] flex h-[43px] w-[46px] items-end justify-center border border-[#99d1ff] bg-[#cce8ff] pb-[3px] pl-0.5">
          <PaneIcon className="h-[26px] w-8" />
        </button>
        <span className="ml-0.5 h-10 w-px bg-[#8e8e8e]" />
        <button aria-label="刷新" className="ml-[23px]">
          <RefreshIcon className="h-8 w-[26px]" />
        </button>
        <button aria-label="导出列表" className="ml-4">
          <ExportIcon className="size-8" />
        </button>
        <span className="ml-2.5 h-10 w-px bg-[#8e8e8e]" />
        <button aria-label="帮助" className="ml-[21px]">
          <HelpBook className="h-8 w-[26px]" />
        </button>
        <button aria-label="操作窗格" className="mt-1.5 ml-[18px]">
          <PaneIcon right className="h-[26px] w-8" />
        </button>
      </div>

      <div className="flex min-h-0 flex-1 gap-1.5 bg-[#efefef] pt-3">
        <div className="w-[400px] shrink-0 border-2 border-[#828790] bg-white pt-0.5 pl-1">
          <div className="flex h-9 w-fit items-center bg-[#cce8ff] pr-2 pl-1">
            <CertIcon className="size-[30px]" />
            <span className="ml-3">证书 - 当前用户</span>
          </div>
          <ul className="pt-px">
            {stores.map((s) => (
              <li key={s} className="flex h-9 items-center pl-[15px] whitespace-nowrap">
                <svg viewBox="0 0 12 18" className="mt-0.5 h-[18px] w-3" fill="none" stroke="#a3a3a3" strokeWidth="3.600">
                  <path d="M1.500 2L9 9L1.500 16" />
                </svg>
                <PlainFolder className="mb-1 ml-[17px] h-[26px] w-7" />
                <span className="mb-0.5 ml-3">{s}</span>
              </li>
            ))}
          </ul>
        </div>
        <div className="flex min-w-0 flex-1 flex-col border-2 border-[#828790] bg-white">
          <div className="min-h-0 flex-1">
            <table className="w-full text-left">
              <thead>
                <tr>
                  <th className="h-[50px] pt-0.5 pl-3.5 font-normal">逻辑存储名</th>
                </tr>
              </thead>
              <tbody>
                {stores.map((s) => (
                  <tr key={s}>
                    <td className="h-[42px] p-0 pl-3">
                      <div className="flex items-center">
                        <PlainFolder className="mb-1 h-[26px] w-7" />
                        <span className="ml-1.5">{s}</span>
                      </div>
                    </td>
                  </tr>
                ))}
              </tbody>
            </table>
          </div>
          <div className="mr-0.5 mb-0.5 ml-0.5">
            <HorizontalThumb grow="flex-1" rest="w-[52px]" right />
          </div>
        </div>
      </div>

      <footer className="flex h-[44px] shrink-0 justify-end border-t border-[#d4d4d4] bg-[#efefef] pt-1 pr-1 pb-0.5">
        <span className="w-[266px] border-l border-[#d6d6d6]" />
        <span className="w-[171px] border-x border-[#d6d6d6]" />
      </footer>
    </section>
  );
}

/* ---------- small explorer in the corner ---------- */

function MiniExplorer() {
  return (
    <section className="absolute top-[745px] right-0 bottom-0 flex w-[187px] flex-col overflow-hidden bg-[#fefefe] text-[11px] leading-5 whitespace-nowrap text-[#222]">
      <header className="flex h-5 shrink-0 items-center bg-[#bfd1dc]">
        <MiniFolder className="h-3.5 w-[13px]" />
        <span className="ml-[7px] h-2.5 w-px bg-[#8b979f]" />
        <CheckDoc className="ml-2 h-3.5 w-[13px]" />
        <MiniFolder className="ml-1.5 h-3.5 w-[13px]" />
        <QuickMenu className="ml-[7px] size-1.5" />
        <span className="ml-[9px] h-2.5 w-px bg-[#8b979f]" />
      </header>
      <nav className="flex h-[23px] shrink-0 items-start border-b border-[#e6e6e6] text-[#444]">
        <button className="h-5 w-12 bg-[#0d6fd1] text-white">文件</button>
        <button className="ml-3 pt-0.5">主页</button>
        <button className="ml-[23px] pt-0.5">共享</button>
        <button className="ml-6 pt-0.5">查看</button>
      </nav>
      <div className="flex h-8 shrink-0 items-center pl-2">
        <ArrowCircle dir="left" className="size-[17px] shrink-0 text-[#6d6d6d]" />
        <ArrowCircle dir="right" hollow className="ml-[9px] size-[17px] shrink-0 text-[#d2d2d2]" />
        <DownTri className="ml-[9px] h-1 w-1.5 shrink-0 text-[#666]" />
        <UpArrow className="ml-3 h-2.5 w-2 shrink-0" />
        <div className="ml-1.5 flex h-[22px] flex-1 items-center border-y border-l border-[#777] pl-1">
          <MiniFolder className="h-3.5 w-[13px] shrink-0" />
          <Crumb className="ml-[7px] h-2 w-1 shrink-0" />
          <span className="ml-2">这台电脑</span>
          <Crumb className="ml-2 h-2 w-1 shrink-0" />
        </div>
      </div>
      <div className="flex min-h-0 flex-1">
        <div className="w-[137px] shrink-0 overflow-hidden border-r border-[#f3f3f3] pt-2">
          {miniGroups.map((g) => (
            <div key={g.name} className="mb-5">
              <div className="flex h-5 items-center gap-1 pl-[17px]">
                {miniIcons[g.icon]}
                {g.name}
              </div>
              <ul>
                {g.items.map((it) =>
                  it.active ? (
                    <li key={it.name} className="flex h-5 items-center gap-[5px] border border-[#dedede] bg-[#efefef] pl-[25px]">
                      {miniIcons[it.icon]}
                      {it.name}
                    </li>
                  ) : (
                    <li key={it.name} className="flex h-5 items-center gap-[5px] pl-[26px]">
                      {miniIcons[it.icon]}
                      {it.name}
                    </li>
                  ),
                )}
              </ul>
            </div>
          ))}
        </div>
        <div className="min-w-0 flex-1">
          <div className="h-6 border-b border-[#e8e8e8] bg-[#fafafa] pt-0.5 pl-4 text-[#4c607a]">名称</div>
          <div className="flex items-center gap-[5px] pt-1 pl-[17px] text-[#2f7d2f]">
            <svg viewBox="0 0 12 14" className="h-3.5 w-3 shrink-0">
              <path d="M.5.500H8.500L11.500 3.500V13.500H.5Z" fill="#eef0f1" stroke="#a5a9ad" strokeWidth=".8" />
              <path d="M2 5H10M2 7.500H10M2 10H10" stroke="#c3c7ca" strokeWidth=".8" />
            </svg>
            1.txt
          </div>
        </div>
      </div>
    </section>
  );
}

export default function App() {
  return (
    <main
      lang="zh-CN"
      className="relative h-screen w-full overflow-hidden bg-[#1c1d22] text-[24px] leading-8 [font-family:'Noto_Sans','Noto_Sans_CJK_SC',sans-serif]"
    >
      {/* windows showing behind the remote session */}
      <div className="absolute inset-y-0 right-0 w-[11px] overflow-hidden bg-[#1e1e3c] pt-[68px]">
        <div className="h-full border-t border-[#111] bg-[#f5f5f6]">
          <svg viewBox="0 0 11 136" className="h-[136px] w-[11px]" fill="none">
            <circle cx="27" cy="40" r="20" stroke="#b5b5b8" strokeWidth="2" />
            <path d="M0 135H11" stroke="#d5d5d8" strokeWidth="2" />
          </svg>
        </div>
      </div>
      <div className="absolute bottom-0 left-24 h-[11px] w-[688px] border-x-2 border-t-2 border-[#bfbfc4] bg-[#f1f1f1]" />

      {/* remote desktop connection */}
      <section className="absolute top-0 right-[11px] bottom-3 left-0 flex flex-col border-2 border-[#2b3444] bg-white">
        <header className="flex h-14 shrink-0 items-center pb-0.5 pl-3.5 text-[#999]">
          <RdpIcon className="h-[33px] w-[30px]" />
          <h1 className="ml-1.5">192.168.184.200 - 远程桌面连接</h1>
          <div className="ml-auto flex items-center pr-[37px]">
            <button aria-label="最小化">
              <Minus className="size-5" />
            </button>
            <button aria-label="最大化" className="ml-[71px]">
              <Square className="size-5" />
            </button>
            <button aria-label="关闭" className="ml-[73px]">
              <Cross className="size-5" />
            </button>
          </div>
        </header>
        <div className="flex min-h-0 flex-1">
          <div className="relative min-w-0 flex-1 overflow-hidden bg-[#2e2e2e]">
            <Explorer />
            <Taskbar />
            <Wizard />
          </div>
          <div className="ml-px flex w-[33px] shrink-0 flex-col bg-[#efefef] text-[#555]">
            <button aria-label="向上滚动" className="flex h-9 shrink-0 items-center justify-center">
              <ChevronUp className="h-2.5 w-3" />
            </button>
            <div className="mt-[143px] mr-px h-[700px] bg-[#cdcdcd]" />
          </div>
        </div>
        <HorizontalThumb grow="w-[954px]" rest="flex-1" />
      </section>

      <CertManager />
      <MiniExplorer />

      <p className="absolute right-2.5 bottom-1 text-[16px] leading-[30px] text-white/70 [font-family:'Liberation_Sans',sans-serif] [text-shadow:1px_1px_1px_rgba(0,0,0,0.2)]">
        https://blog.csdn.net/Kiaeee
      </p>
    </main>
  );
}
